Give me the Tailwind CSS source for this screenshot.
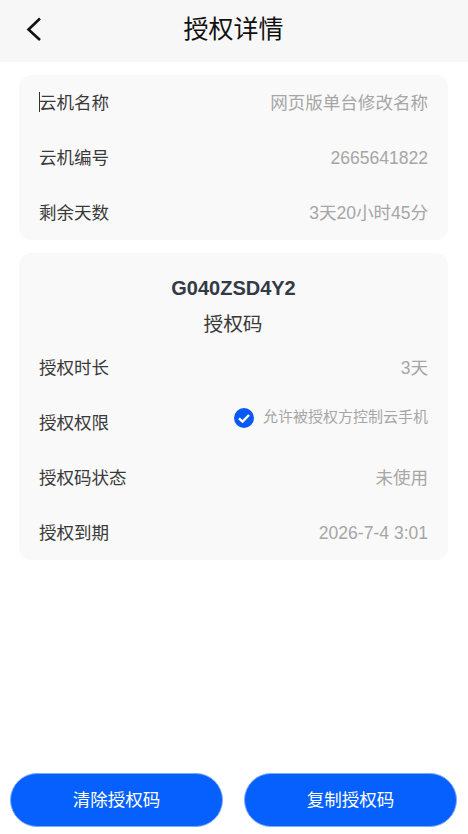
<!DOCTYPE html>
<html lang="zh-CN">
  <head>
    <meta charset="UTF-8" />
    <meta name="viewport" content="width=device-width, initial-scale=1.0" />
    <title>授权详情</title>
    <script src="https://cdn.jsdelivr.net/npm/@tailwindcss/browser@4"></script>
  </head>

  <body class="bg-white font-['Liberation_Sans','Noto_Sans_CJK_SC',sans-serif]">
    <div class="flex flex-col h-[834px] w-[468px] overflow-hidden">
      <!-- cabecalho -->
      <header class="relative flex items-center justify-center h-[62px] bg-[#f7f7f7]">
        <svg class="absolute left-[26px] top-[17px] w-[16px] h-[24px]" viewBox="0 0 16 24" fill="none">
          <path d="M14 1.5 L2.5 12.5 L14 23" stroke="#111" stroke-width="2.6" />
        </svg>
        <h1 class="text-[25px] leading-[56px] text-[#111] pb-[5px] pr-[1px]">授权详情</h1>
      </header>

      <main class="flex-1 flex flex-col gap-[13px] pt-[13px] pl-[19px] pr-[20px]">
        <section class="relative bg-[#f9f9f9] rounded-[12px] px-[20px]">
          <div class="flex items-center justify-between h-[55px] pt-[2px] text-[17.55px]">
            <span class="text-[#3a3a3a]">云机名称</span>
            <span class="text-[#a6a6a6]">网页版单台修改名称</span>
          </div>
          <div class="flex items-center justify-between h-[55px] pt-[2px] text-[17.55px]">
            <span class="text-[#3a3a3a]">云机编号</span>
            <span class="text-[#a6a6a6]">2665641822</span>
          </div>
          <div class="flex items-center justify-between h-[55px] pt-[2px] text-[17.55px]">
            <span class="text-[#3a3a3a]">剩余天数</span>
            <span class="text-[#a6a6a6]">3天20小时45分</span>
          </div>
          <!-- cursor de texto -->
          <div class="absolute left-[20px] top-[17px] w-px h-[20px] bg-[#333]"></div>
        </section>

        <section class="bg-[#f9f9f9] rounded-[12px] px-[20px] pt-[17px]">
          <div class="text-center font-bold text-[20px] leading-[36px] text-[#333a45]">G040ZSD4Y2</div>
          <div class="text-center text-[19.7px] leading-[36px] text-[#3a3a3a] mb-[-2px] pr-[1px]">授权码</div>
          <div class="flex items-center justify-between h-[55px] pt-[2px] text-[17.55px]">
            <span class="text-[#3a3a3a]">授权时长</span>
            <span class="text-[#a6a6a6]">3天</span>
          </div>
          <div class="flex items-center justify-between h-[55px] pt-[2px] text-[17.55px]">
            <span class="text-[#3a3a3a]">授权权限</span>
            <span class="flex items-center gap-[9px] mb-[12px] text-[15px] text-[#a6a6a6]">
              <svg class="w-[20px] h-[20px]" viewBox="0 0 20 20">
                <circle cx="10" cy="10" r="10" fill="#0759f5" />
                <path d="M5 10.3 L8.6 13.6 L15 7" fill="none" stroke="#fff" stroke-width="2.4" />
              </svg>
              允许被授权方控制云手机
            </span>
          </div>
          <div class="flex items-center justify-between h-[55px] pt-[2px] text-[17.55px]">
            <span class="text-[#3a3a3a]">授权码状态</span>
            <span class="text-[#a6a6a6]">未使用</span>
          </div>
          <div class="flex items-center justify-between h-[55px] pt-[2px] text-[17.55px]">
            <span class="text-[#3a3a3a]">授权到期</span>
            <span class="text-[#a6a6a6]">2026-7-4 3:01</span>
          </div>
        </section>
      </main>

      <footer class="flex gap-[21px] pl-[10px] pb-[7px]">
        <button class="w-[213px] h-[54px] rounded-full bg-[#0560fd] border border-[#7fa8f5] text-white text-[17.55px]">清除授权码</button>
        <button class="w-[213px] h-[54px] rounded-full bg-[#0560fd] border border-[#7fa8f5] text-white text-[17.55px]">复制授权码</button>
      </footer>
    </div>
  </body>
</html>
